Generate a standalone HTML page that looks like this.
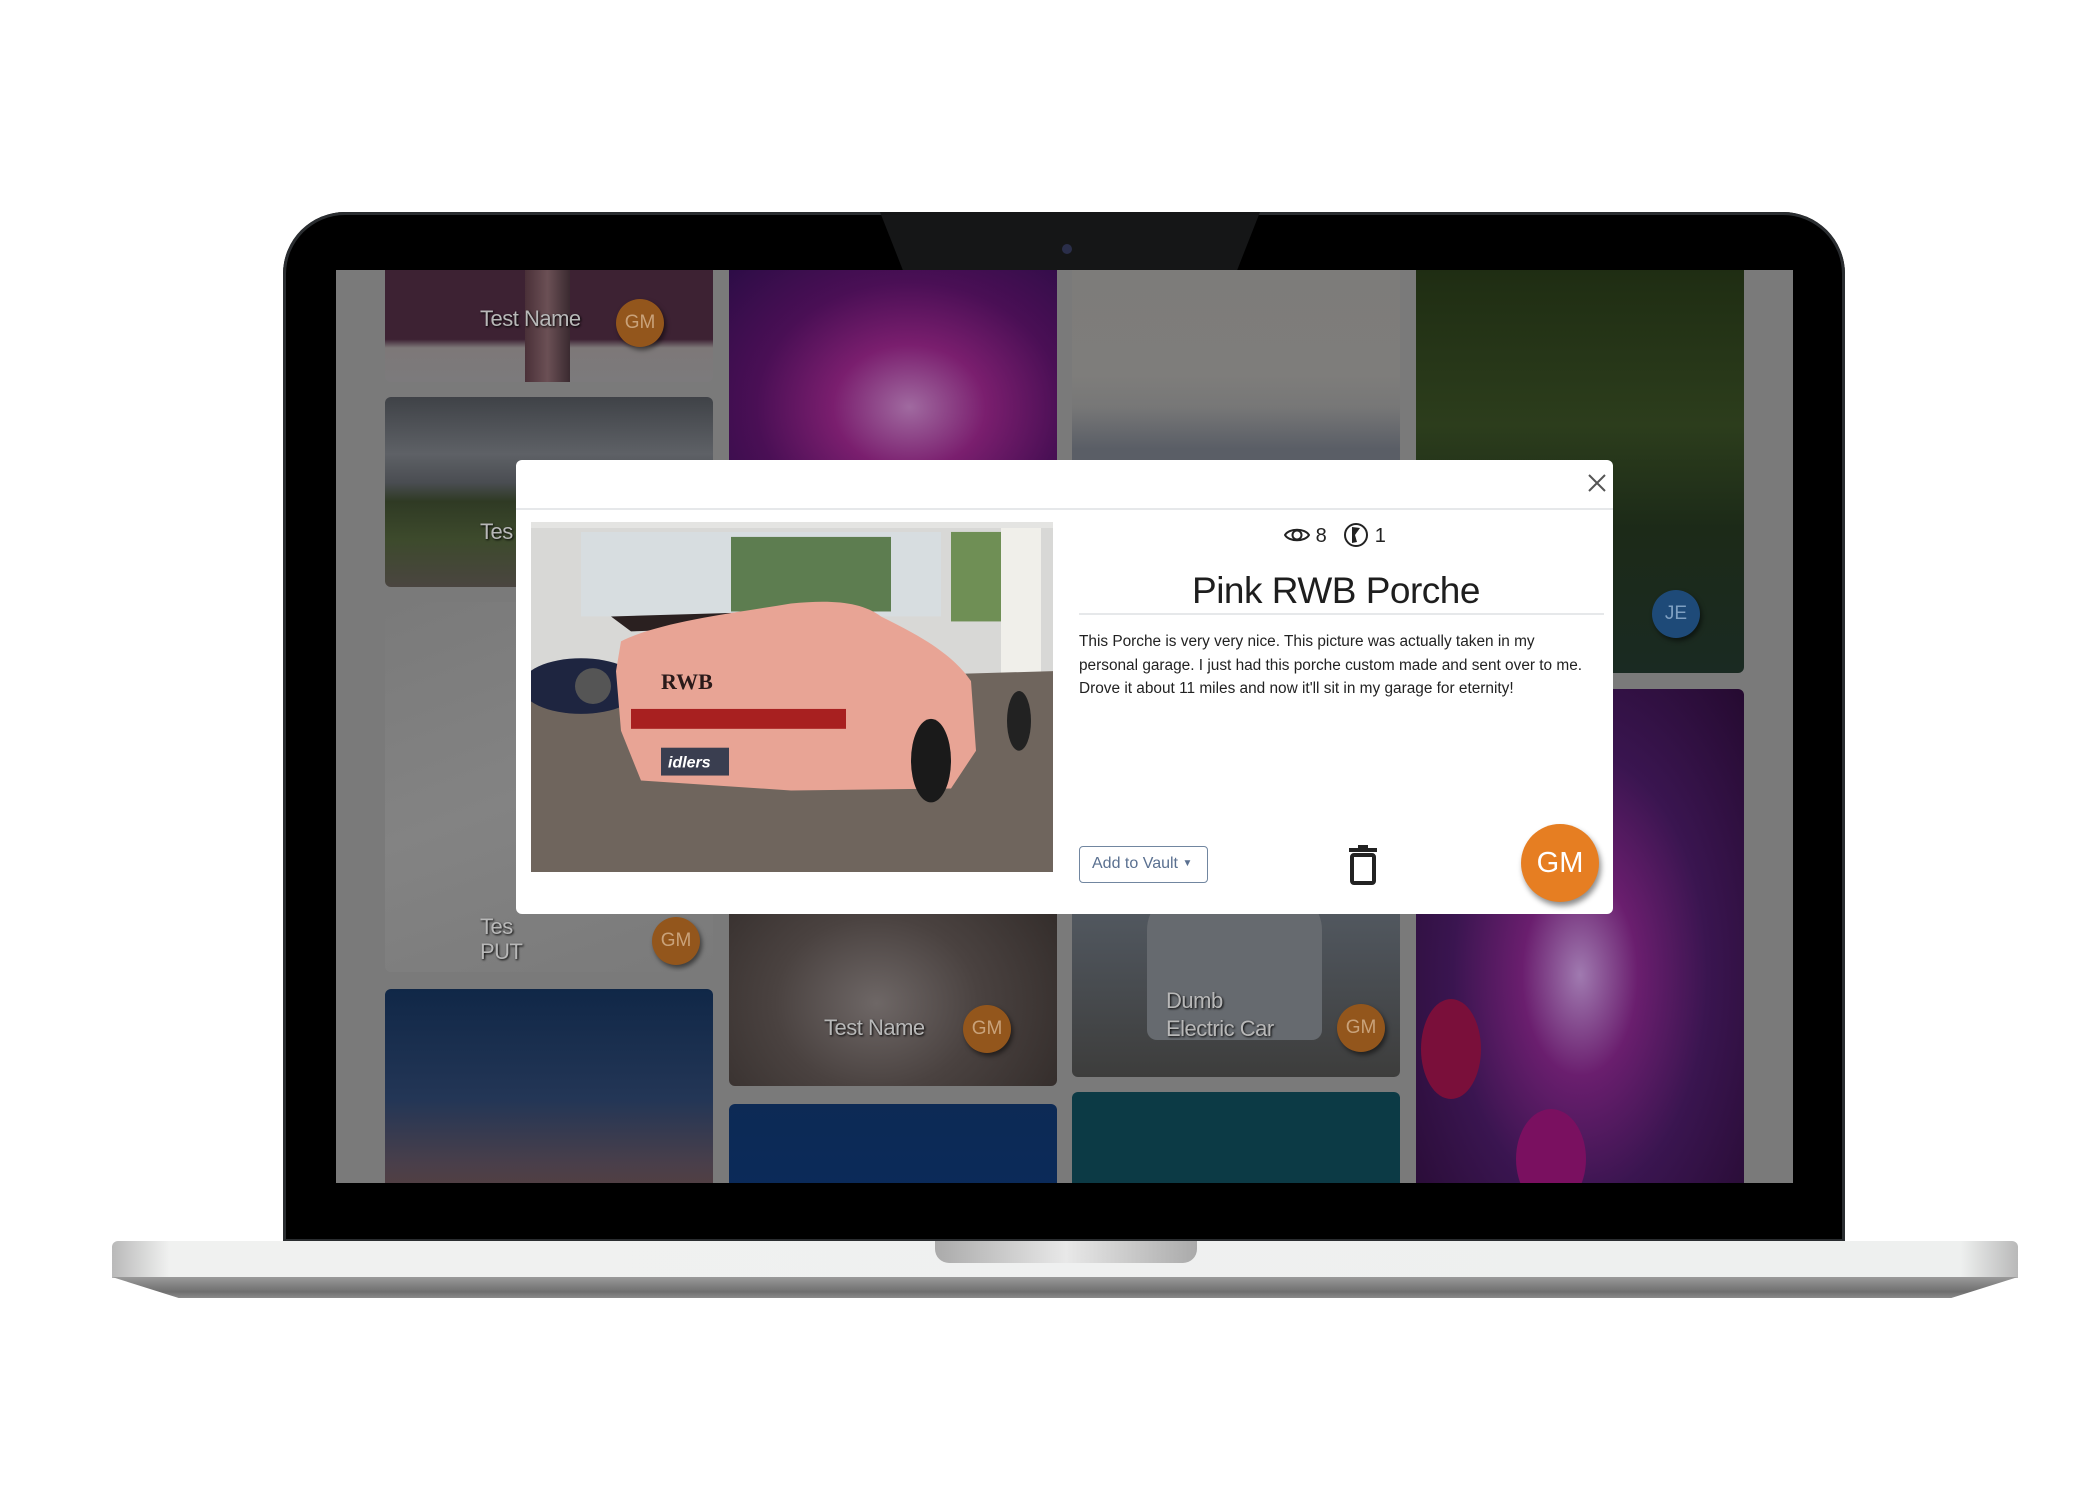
<!DOCTYPE html>
<html><head><meta charset="utf-8"><style>
*{margin:0;padding:0;box-sizing:border-box}
body{width:2100px;height:1500px;background:#fff;position:relative;overflow:hidden;font-family:"Liberation Sans",sans-serif}
.abs{position:absolute}
.bezel{left:283px;top:212px;width:1562px;height:1030px;background:#000;border-radius:62px 62px 0 0;box-shadow:inset 0 0 0 3px #2a2d30}
.notch{left:880px;top:212px;width:380px;height:58px;background:#151617;clip-path:polygon(0 0,100% 0,94% 100%,6% 100%)}
.screen{left:336px;top:270px;width:1457px;height:913px;background:#7a7a7a;overflow:hidden}
.tile{position:absolute;width:328px;border-radius:6px;overflow:hidden}
.lbl{position:absolute;color:#b8b8b8;font-size:22px;text-shadow:1px 1px 2px #000;letter-spacing:-0.5px}
.av{position:absolute;width:48px;height:48px;border-radius:50%;background:#93561c;color:#c9a27a;font-size:19px;display:flex;align-items:center;justify-content:center;box-shadow:2px 3px 5px rgba(0,0,0,.5)}
.modal{left:516px;top:460px;width:1097px;height:454px;background:#fff;border-radius:6px}
</style></head><body>
<div class="abs bezel"></div>
<div class="abs notch"></div>
<div class="abs" style="left:1062px;top:244px;width:10px;height:10px;border-radius:50%;background:#2a2e4a"></div>
<div class="abs screen">
 <div class="tile" style="left:49px;top:-10px;height:122px;background:linear-gradient(180deg,#3d2233 0%,#3d2233 65%,#7d7878 72%,#7c7a7c 100%)">
  <div class="abs" style="left:140px;top:0;width:45px;height:122px;background:linear-gradient(90deg,#4a3038,#6b5055,#3a2a30)"></div>
  <div class="lbl" style="left:95px;top:46px">Test Name</div>
  <div class="av" style="left:231px;top:39px">GM</div>
 </div>
 <div class="tile" style="left:49px;top:127px;height:190px;background:linear-gradient(180deg,#3f4247 0%,#5e6166 30%,#4a4d52 45%,#2f3a24 55%,#3d4a2c 75%,#4a4540 100%)">
  <div class="lbl" style="left:95px;top:122px">Tes</div>
 </div>
 <div class="tile" style="left:49px;top:332px;height:370px;background:linear-gradient(160deg,#7a7a7a,#838383 50%,#7a7a7a)">
  <div class="lbl" style="left:95px;top:312px">Tes</div>
  <div class="lbl" style="left:95px;top:337px">PUT</div>
  <div class="av" style="left:267px;top:315px">GM</div>
 </div>
 <div class="tile" style="left:49px;top:719px;height:220px;background:linear-gradient(180deg,#102747 0%,#233656 50%,#4a3f4a 80%,#5a3f3a 100%)"></div>
 <div class="tile" style="left:393px;top:-10px;height:210px;background:radial-gradient(ellipse at 55% 70%,#a06aa0 0%,#7a1e6e 30%,#4a0f55 60%,#2a0c45 100%)"></div>
 <div class="tile" style="left:393px;top:580px;height:236px;background:radial-gradient(ellipse at 45% 65%,#6e6766 0%,#4a4240 40%,#2a2422 100%)">
  <div class="lbl" style="left:95px;top:165px">Test Name</div>
  <div class="av" style="left:234px;top:155px">GM</div>
 </div>
 <div class="tile" style="left:393px;top:834px;height:100px;background:linear-gradient(180deg,#0d2a55,#0a2a5a)"></div>
 <div class="tile" style="left:736px;top:-10px;height:210px;background:linear-gradient(180deg,#7d7c7a 0%,#7e7d7b 55%,#777 70%,#5a5e66 90%)"></div>
 <div class="tile" style="left:736px;top:580px;height:227px;background:linear-gradient(180deg,#5b636c 0%,#4c5157 45%,#3d3d3c 100%)">
  <div class="abs" style="left:75px;top:40px;width:175px;height:150px;border-radius:40px 40px 10px 10px;background:#666a6f"></div>
  <div class="lbl" style="left:94px;top:138px">Dumb</div>
  <div class="lbl" style="left:94px;top:166px">Electric Car</div>
  <div class="av" style="left:265px;top:154px">GM</div>
 </div>
 <div class="tile" style="left:736px;top:822px;height:110px;background:#0c3a45"></div>
 <div class="tile" style="left:1080px;top:-10px;height:413px;background:linear-gradient(180deg,#1e2c12 0%,#2c3d1c 40%,#1c2a18 65%,#1a2a22 100%)">
  <div class="av" style="left:236px;top:330px;background:#1e4a78;color:#7fa0c2">JE</div>
 </div>
 <div class="tile" style="left:1080px;top:419px;height:520px;background:radial-gradient(ellipse at 50% 55%,#a07ab0 0%,#6a1e6e 25%,#3a1550 55%,#250a30 100%)">
  <div class="abs" style="left:5px;top:310px;width:60px;height:100px;border-radius:50%;background:#7a0f3a"></div>
  <div class="abs" style="left:100px;top:420px;width:70px;height:100px;border-radius:50%;background:#7a1060"></div>
 </div>
</div>
<div class="abs modal">
 <div class="abs" style="left:0;top:48px;width:1097px;height:2px;background:#e6e8ea"></div>
 <svg class="abs" style="left:1072px;top:14px" width="18" height="18" viewBox="0 0 18 18"><path d="M1 1L17 17M17 1L1 17" stroke="#555" stroke-width="2"/></svg>
 <svg class="abs" style="left:15px;top:62px" width="522" height="350" viewBox="0 0 522 352" preserveAspectRatio="none">
  <rect width="522" height="352" fill="#d8d8d6"/>
  <rect x="50" y="10" width="360" height="85" fill="#d7dde0"/>
  <rect x="200" y="15" width="160" height="75" fill="#5d7d50"/>
  <rect x="420" y="10" width="50" height="90" fill="#6f8f55"/>
  <rect x="470" y="0" width="40" height="190" fill="#f0efea"/>
  <rect x="0" y="0" width="522" height="6" fill="#e4e4e2"/>
  <polygon points="0,165 522,150 522,352 0,352" fill="#6f655d"/>
  <ellipse cx="50" cy="165" rx="60" ry="28" fill="#1e2540"/>
  <circle cx="62" cy="165" r="18" fill="#555"/>
  <path d="M80 95 L320 88 L330 102 L100 110Z" fill="#2a2020"/>
  <path d="M90 120 C 130 100 200 92 260 82 C 300 78 330 80 350 95 C 380 110 420 130 440 160 L445 230 L420 268 L260 270 L110 260 L90 210 L85 150Z" fill="#e8a495"/>
  <rect x="100" y="188" width="215" height="20" fill="#a82020"/>
  <rect x="130" y="227" width="68" height="28" fill="#3a3e50"/>
  <text x="137" y="247" fill="#fff" font-size="16" font-style="italic" font-weight="bold" font-family="Liberation Sans">idlers</text>
  <text x="130" y="168" fill="#2a1a1a" font-size="22" font-weight="bold" font-family="Liberation Serif">RWB</text>
  <ellipse cx="400" cy="240" rx="20" ry="42" fill="#1a1a1a"/>
  <ellipse cx="488" cy="200" rx="12" ry="30" fill="#222"/>
 </svg>
 <div class="abs" style="left:553px;top:62px;width:532px;text-align:center;height:30px">
  <svg width="26" height="18" viewBox="0 0 26 18" style="vertical-align:-2px"><path d="M1 9C5 2 21 2 25 9C21 16 5 16 1 9Z" fill="none" stroke="#222" stroke-width="2"/><circle cx="13" cy="9" r="4.5" fill="none" stroke="#222" stroke-width="2"/></svg><span style="font-size:20px;color:#222"> 8</span>
  <svg width="26" height="26" viewBox="0 0 26 26" style="vertical-align:-6px;margin-left:12px"><circle cx="13" cy="13" r="11" fill="none" stroke="#222" stroke-width="2"/><path d="M9 5L9 21L14 20L12 13L17 6Z" fill="#222"/></svg><span style="font-size:20px;color:#222"> 1</span>
 </div>
 <div class="abs" style="left:555px;top:110px;width:530px;text-align:center;font-size:37px;color:#1e1e1e;letter-spacing:-0.5px">Pink RWB Porche</div>
 <div class="abs" style="left:563px;top:153px;width:525px;height:2px;background:#e6e8ea"></div>
 <div class="abs" style="left:563px;top:170px;width:515px;font-size:15.4px;line-height:23.5px;color:#222">This Porche is very very nice. This picture was actually taken in my personal garage. I just had this porche custom made and sent over to me. Drove it about 11 miles and now it'll sit in my garage for eternity!</div>
 <div class="abs" style="left:563px;top:386px;width:129px;height:37px;border:1.5px solid #7186a0;border-radius:4px;color:#5a7090;font-size:16px;line-height:34px;padding-left:12px">Add to Vault <span style="font-size:10px;vertical-align:2px">&#9660;</span></div>
 <svg class="abs" style="left:832px;top:385px" width="30" height="40" viewBox="0 0 30 40"><rect x="1" y="3" width="28" height="4" fill="#222"/><rect x="10" y="0" width="10" height="4" fill="#222"/><rect x="4" y="10" width="22" height="28" fill="none" stroke="#222" stroke-width="4" rx="2"/></svg>
 <div class="abs" style="left:1005px;top:364px;width:78px;height:78px;border-radius:50%;background:#e67e22;color:#fff;font-size:29px;display:flex;align-items:center;justify-content:center;box-shadow:2px 4px 6px rgba(0,0,0,.45)">GM</div>
</div>
<div class="abs" style="left:112px;top:1241px;width:1906px;height:37px;background:linear-gradient(90deg,#b9b9b9 0,#f0f1f0 3%,#eef0ef 97%,#b9b9b9 100%);border-radius:6px 6px 0 0"></div>
<div class="abs" style="left:112px;top:1277px;width:1906px;height:21px;background:linear-gradient(180deg,#9a9a9a,#6f6f6f 70%,#8a8a8a);clip-path:polygon(0 0,100% 0,96.5% 100%,3.5% 100%)"></div>
<div class="abs" style="left:935px;top:1241px;width:262px;height:22px;background:linear-gradient(90deg,#aaa,#e8e8e8 50%,#aaa);border-radius:0 0 14px 14px"></div>
</body></html>
